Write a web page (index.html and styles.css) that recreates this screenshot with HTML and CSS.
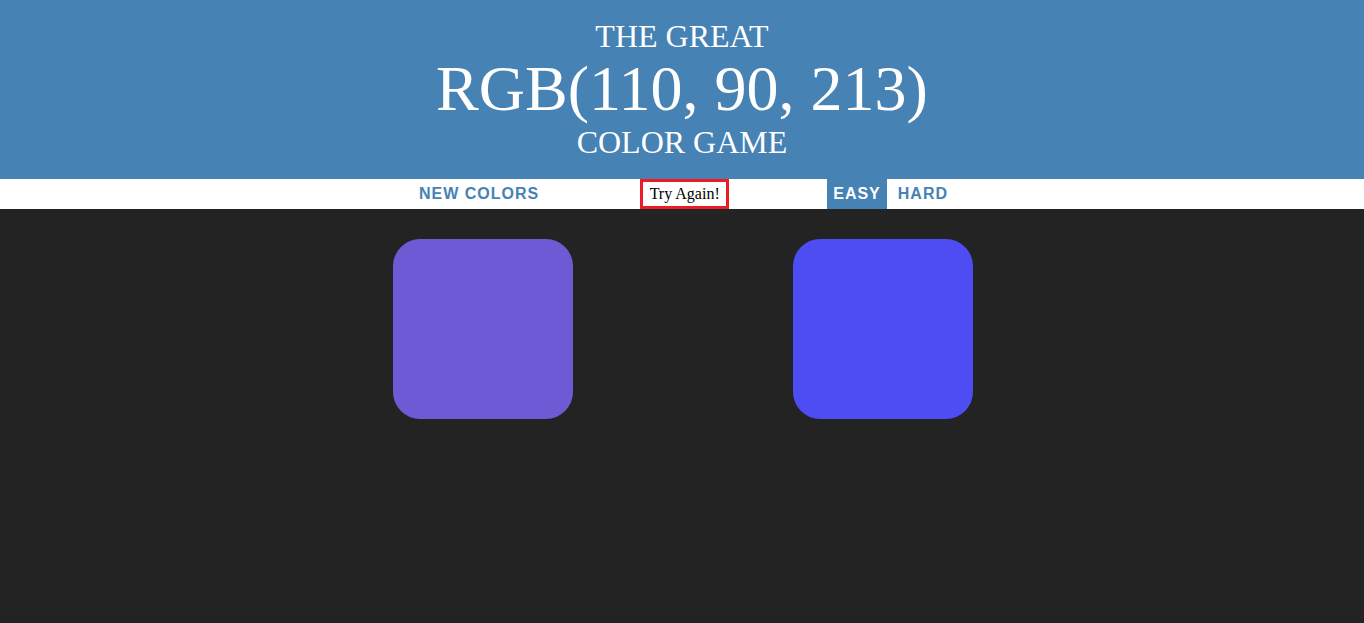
FILE: index.html
```html
<!DOCTYPE html>
<html>
<head>
<meta charset="utf-8">
<title>Color Game</title>
<link rel="stylesheet" href="styles.css">
</head>
<body>
<h1 class="title">The Great<br><span class="color-display">RGB(110, 90, 213)</span><br>Color Game</h1>
<div class="stripe">
  <button class="btn btn-reset">New Colors</button>
  <span class="message">Try Again!</span>
  <button class="btn btn-mode selected">Easy</button>
  <button class="btn btn-mode btn-hard">Hard</button>
</div>
<div class="container">
  <div class="square sq-a"></div>
  <div class="square sq-hidden"></div>
  <div class="square sq-b"></div>
</div>
</body>
</html>
```
FILE: styles.css
```css
html, body {
  margin: 0;
  padding: 0;
}
body {
  background: #232323;
  font-family: "Liberation Serif", "Times New Roman", serif;
  height: 623px;
  overflow: hidden;
}
.title {
  margin: 0;
  padding: 19px 0;
  background: #4682b4;
  color: #fff;
  text-align: center;
  text-transform: uppercase;
  font-weight: normal;
  font-size: 32px;
  line-height: 1.1;
}
.color-display {
  font-size: 200%;
}
.stripe {
  background: #fff;
  height: 30px;
  display: flex;
  justify-content: center;
  align-items: stretch;
  padding-left: 4px;
}
.btn {
  border: none;
  background: none;
  margin: 0;
  padding: 0 10px;
  height: 30px;
  font-family: "Liberation Sans", Arial, sans-serif;
  font-weight: 700;
  font-size: 16px;
  letter-spacing: 1px;
  text-transform: uppercase;
  color: #4682b4;
  outline: none;
}
.btn.btn-mode {
  padding: 0 6px;
}
.btn.btn-hard {
  padding: 0 11px;
}
.btn.selected {
  background: #4682b4;
  color: #fff;
}
.message {
  box-sizing: border-box;
  width: 89px;
  height: 30px;
  margin: 0 98px 0 91px;
  border: 3px solid #ed1c24;
  color: #000;
  font-size: 16px;
  display: flex;
  align-items: center;
  justify-content: center;
}
.container {
  width: 600px;
  margin: 20px auto;
  display: flex;
  padding-left: 1px;
}
.square {
  width: 180px;
  height: 180px;
  margin: 10px;
  border-radius: 15%;
}
.sq-a { background: rgb(110, 90, 213); }
.sq-b { background: rgb(78, 77, 243); }
.sq-hidden { background: #232323; }
```
